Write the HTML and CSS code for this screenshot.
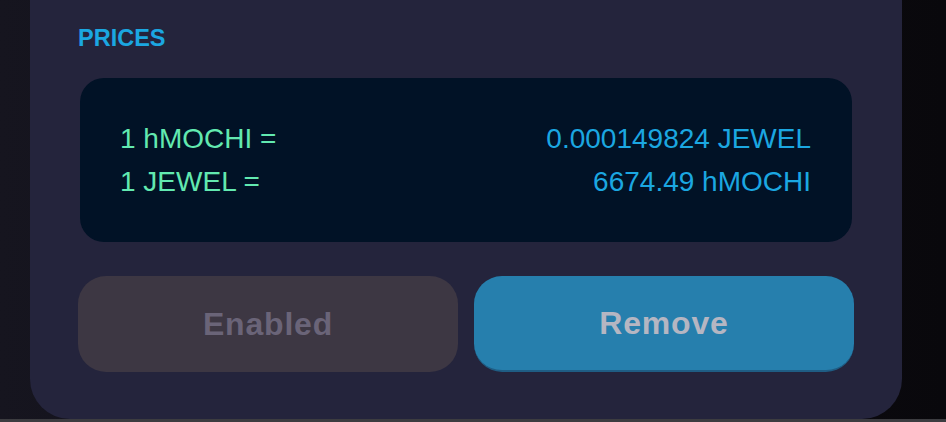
FILE: index.html
```html
<!DOCTYPE html>
<html>
<head>
<meta charset="utf-8">
<link rel="stylesheet" href="styles.css">
</head>
<body>
<div class="stage">
  <div class="card">
    <div class="label">PRICES</div>
    <div class="prices">
      <div class="row"><span class="key">1 hMOCHI =</span><span class="val">0.000149824 JEWEL</span></div>
      <div class="row"><span class="key">1 JEWEL =</span><span class="val">6674.49 hMOCHI</span></div>
    </div>
    <div class="actions">
      <button class="btn btn-disabled">Enabled</button>
      <button class="btn btn-primary">Remove</button>
    </div>
  </div>
</div>
<div class="strip"></div>
</body>
</html>
```
FILE: styles.css
```css
* { box-sizing: border-box; }
html, body { margin: 0; padding: 0; }
body {
  width: 946px;
  height: 422px;
  overflow: hidden;
  font-family: "Liberation Sans", Arial, sans-serif;
  background: #3c3c40;
  display: flex;
  flex-direction: column;
}
.stage {
  height: 419px;
  background: linear-gradient(90deg, #16151f 0%, #100f17 40%, #09080c 100%);
  display: flex;
}
.card {
  margin-left: 30px;
  width: 872px;
  height: 419px;
  background: #24243c;
  border-radius: 0 0 40px 40px;
  padding: 24px 48px 0;
  display: flex;
  flex-direction: column;
}
.label {
  font-size: 23.5px;
  line-height: 28px;
  font-weight: bold;
  color: #1ba7e1;
}
.prices {
  margin: 26px 2px 0;
  background: #011226;
  border-radius: 24px;
  padding: 39px 41px 39px 40px;
  font-size: 28px;
  line-height: 43px;
}
.row {
  display: flex;
  justify-content: space-between;
}
.key { color: #62e9b0; }
.val { color: #1ba7e1; }
.actions {
  margin-top: 34px;
  display: flex;
  gap: 16px;
}
.btn {
  flex: 1;
  height: 96px;
  border: none;
  border-radius: 28px;
  font-family: "Liberation Sans", Arial, sans-serif;
  font-size: 32px;
  font-weight: bold;
  letter-spacing: 0.8px;
  padding: 0;
}
.btn-disabled {
  background: #3d3743;
  color: #6a6478;
}
.btn-primary {
  background: #267fad;
  color: #b5b6c2;
  border-bottom: 2px solid #1f5d84;
}
.strip { height: 3px; background: #3c3c40; }
```
